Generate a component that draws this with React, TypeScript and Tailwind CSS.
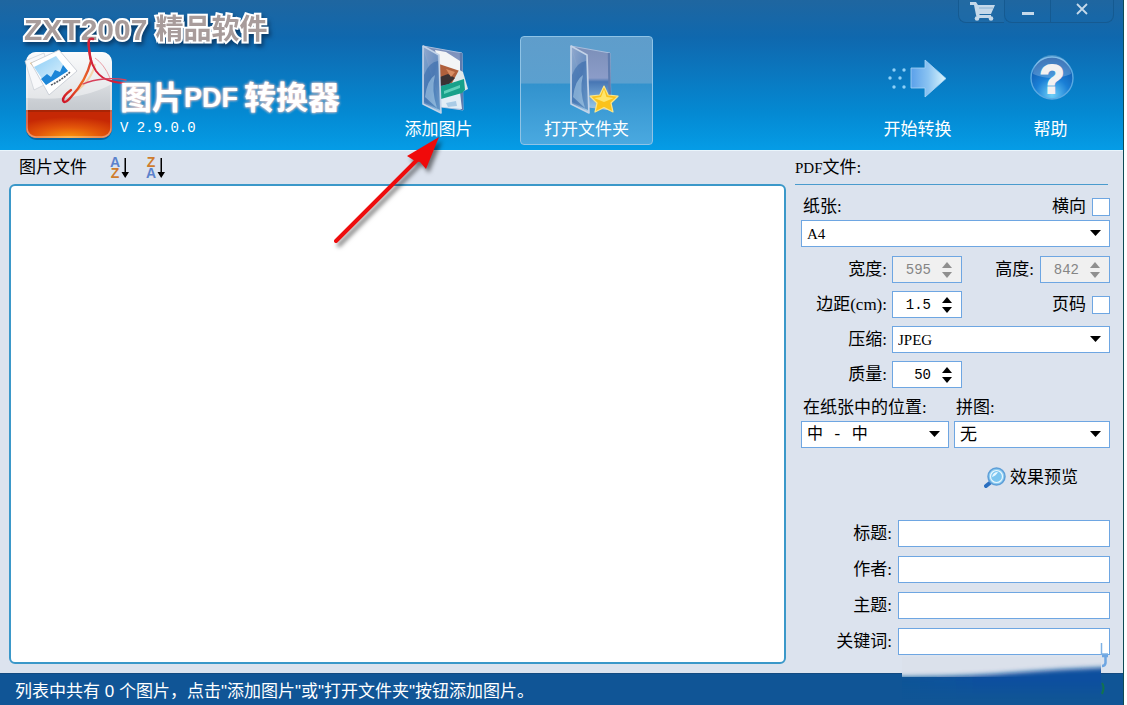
import React, { useState } from 'react';
import { clsx } from 'clsx';

interface ToolButtonProps {
  label: string;
  active?: boolean;
  children: React.ReactNode;
}

function ToolButton({ label, active, children }: ToolButtonProps) {
  return (
    <button
      type="button"
      className={clsx(
        'flex w-[133px] flex-col items-center rounded border pt-2 text-white',
        active
          ? 'border-[#8fc3e6] bg-[linear-gradient(to_bottom,#5f9dcb_0%,#5ba0cf_43%,#3292cd_44%,#4aa9e0_100%)]'
          : 'border-transparent'
      )}
    >
      {children}
      <span className="text-[17px] leading-[29px]">{label}</span>
    </button>
  );
}

function Folder({ id, children }: { id: string; children?: React.ReactNode }) {
  return (
    <svg width="64" height="70" viewBox="-15 0 64 70" aria-hidden="true">
      <defs>
        <linearGradient id={id + 'back'} x1="0" y1="0" x2="0" y2="1">
          <stop offset="0" stopColor="#7b8fb8" />
          <stop offset=".5" stopColor="#8b9cc8" />
          <stop offset=".56" stopColor="#4776b4" />
          <stop offset="1" stopColor="#9accec" />
        </linearGradient>
        <linearGradient id={id + 'front'} x1="0" y1="0" x2="1" y2="1">
          <stop offset="0" stopColor="#94abcf" />
          <stop offset=".5" stopColor="#6a90c2" />
          <stop offset="1" stopColor="#b4d8ef" />
        </linearGradient>
      </defs>
      <path d="M1 1L40 8L41 65L19 62Z" fill={`url(#${id}back)`} stroke="#a9bddc" strokeWidth="1" />
      <path d="M39 8L40 65" stroke="#5f7cae" strokeWidth="2.5" />
      {children}
      <path d="M1 1L17 10L19 68L1 59Z" fill={`url(#${id}front)`} fillOpacity=".9" stroke="#c3d3e8" strokeWidth="1.6" strokeLinejoin="round" />
      <path d="M2 30Q7 17 16 16L18 65L2 57Z" fill="#2b62a6" fillOpacity=".5" />
      <path d="M3 52Q5 35 13 30Q9 45 15 63Z" fill="#c6e4f6" fillOpacity=".45" />
    </svg>
  );
}

function AddImageIcon() {
  return (
    <Folder id="add">
      <path d="M36 24L41 27L46 44L38 48L28 40Z" fill="#dfe8ea" />
      <path d="M18 53L38 48L40 64L19 62Z" fill="#e2edf6" />
      <path d="M24 58L34 56L35 61L26 62Z" fill="#a9cbe6" />
      <path d="M17 18L37 25L30 38L18 38Z" fill="#b0603c" />
      <path d="M18 32L26 29L33 33L27 39L18 41Z" fill="#3b3234" />
      <path d="M24 24L33 27L29 32Z" fill="#d98d62" />
      <path d="M13 5L24 7L38 16L38 26L17 19Z" fill="#f3f5f6" />
      <path d="M17 42L42 34L43 45L40 48L19 54Z" fill="#17a18a" />
      <path d="M22 46L38 40L38 43L22 49Z" fill="#5fd0ba" />
    </Folder>
  );
}

function OpenFolderIcon() {
  return (
    <Folder id="open">
      <path d="M34 41L38.2 50L48 51.2L41 58L43 67L34 62.5L25 67L27 58L20 51.2L29.8 50Z" fill="#fbc21b" stroke="#fbe68a" strokeWidth="1.2" strokeLinejoin="round" />
      <path d="M34 44L36.5 52L44 53L34 57L24 53L31 52Z" fill="#fff08a" fillOpacity=".75" />
    </Folder>
  );
}

function StartIcon() {
  return (
    <svg width="64" height="70" viewBox="0 0 64 70" aria-hidden="true">
      <defs>
        <linearGradient id="arrow" x1="0" y1="0" x2="1" y2="0">
          <stop offset="0" stopColor="#5aa0ea" />
          <stop offset=".5" stopColor="#8cc4f2" />
          <stop offset="1" stopColor="#dcf6fd" />
        </linearGradient>
      </defs>
      <g fill="#8fd0f7">
        <circle cx="8" cy="25" r="1.7" />
        <circle cx="18" cy="25" r="1.7" />
        <circle cx="4" cy="33" r="1.7" />
        <circle cx="14" cy="33" r="1.7" />
        <circle cx="8" cy="42" r="1.7" />
        <circle cx="18" cy="42" r="1.7" />
      </g>
      <path d="M25 23H39V15L60 33.500L39 52V43H25Z" fill="url(#arrow)" stroke="#a8d6f6" strokeWidth=".8" />
    </svg>
  );
}

function HelpIcon() {
  return (
    <svg width="64" height="70" viewBox="0 0 64 70" aria-hidden="true">
      <defs>
        <radialGradient id="ball" cx=".5" cy=".9" r=".9">
          <stop offset="0" stopColor="#6fd0f8" />
          <stop offset=".45" stopColor="#1a7fd6" />
          <stop offset="1" stopColor="#0b4da0" />
        </radialGradient>
      </defs>
      <circle cx="33" cy="33" r="21" fill="url(#ball)" stroke="#5aa9e2" strokeWidth="1.4" />
      <path d="M14 29A19 19 0 0 1 52 29Q33 37 14 29Z" fill="#fff" fillOpacity=".22" />
      <text x="33" y="48" textAnchor="middle" fontFamily="Liberation Sans" fontWeight="700" fontSize="40" fill="#f3f1f1" stroke="#f3f1f1" strokeWidth="2">?</text>
    </svg>
  );
}

function Logo() {
  return (
    <svg width="110" height="106" viewBox="0 0 110 106" className="relative shrink-0" aria-hidden="true">
      <defs>
        <linearGradient id="tile" x1="0" y1="0" x2="0" y2="1">
          <stop offset="0" stopColor="#f5f6f8" />
          <stop offset=".6" stopColor="#c9cdd2" />
          <stop offset="1" stopColor="#b4b8be" />
        </linearGradient>
        <radialGradient id="fire" cx=".5" cy="1" r=".75">
          <stop offset="0" stopColor="#fb9a0c" />
          <stop offset=".5" stopColor="#e4570a" />
          <stop offset="1" stopColor="#c62805" />
        </radialGradient>
        <linearGradient id="sky" x1="0" y1="0" x2="1" y2="1">
          <stop offset="0" stopColor="#8ccdf6" />
          <stop offset="1" stopColor="#e8f6fd" />
        </linearGradient>
        <linearGradient id="ribbon" x1="1" y1="0" x2="0" y2="1">
          <stop offset="0" stopColor="#c8213c" />
          <stop offset=".5" stopColor="#ee6a24" />
          <stop offset="1" stopColor="#cf1428" />
        </linearGradient>
        <clipPath id="tileClip">
          <rect x="6" y="16" width="86" height="86" rx="10" />
        </clipPath>
      </defs>
      <rect x="6" y="19" width="86" height="85" rx="11" fill="#06406f" fillOpacity=".55" />
      <g clipPath="url(#tileClip)">
        <rect x="6" y="16" width="86" height="86" fill="url(#tile)" />
        <path d="M6 62Q60 66 92 48V16H6Z" fill="#fff" fillOpacity=".45" />
        <rect x="6" y="74" width="86" height="28" fill="url(#fire)" />
        <path d="M6 74H92V76H6Z" fill="#a92506" />
      </g>
      <rect x="7" y="17" width="84" height="84" rx="9" fill="none" stroke="#fff" strokeOpacity=".4" strokeWidth="1.5" />
      <path d="M5 25L24 17L32 45L14 54Z" fill="#f7f8fa" stroke="#c9ced6" strokeWidth=".7" />
      <path d="M10 27L24 22L16 34Z" fill="#f2a73a" />
      <path d="M11 27L39 14L57 35L29 59Z" fill="#fff" stroke="#c3c8d0" strokeWidth=".8" />
      <path d="M14 31L36 20L48 35L26 49Z" fill="url(#sky)" />
      <path d="M21 43L27 38L31 41L35 34L40 36L43 29L48 35L26 49Z" fill="#1c86d8" />
      <path d="M31 49Q42 44 50 36" fill="none" stroke="#555b64" strokeWidth="1.6" strokeDasharray="2 1" />
      <path d="M75 28Q72 44 54 57" fill="none" stroke="#f8c27e" strokeOpacity=".6" strokeWidth="2" />
      <path d="M75 22Q84 28 90 42" fill="none" stroke="#e9a0a8" strokeWidth="1" />
      <path d="M73 3Q67 1 69 12Q70 21 71 25Q66 45 51 61Q44 69 43 64Q43 60 51 54" fill="none" stroke="url(#ribbon)" strokeWidth="2.4" strokeLinecap="round" />
      <path d="M69 5Q68 23 76 35Q82 43 91 45Q99 47 104 47" fill="none" stroke="#d2203a" strokeWidth="2" strokeLinecap="round" />
      <path d="M106 44Q96 42 84 43Q72 44 63 48" fill="none" stroke="#d8405a" strokeWidth="1.3" strokeLinecap="round" />
    </svg>
  );
}

function SortIcon({ top, bottom }: { top: string; bottom: string }) {
  const fill = (ch: string) => (ch === 'A' ? '#5b82cc' : '#cf7c2c');
  return (
    <svg width="20" height="30" viewBox="0 0 20 30" className="overflow-visible" aria-hidden="true" fontFamily="Liberation Sans" fontWeight="700" fontSize="14">
      <text x="5" y="14" textAnchor="middle" fill={fill(top)}>{top}</text>
      <text x="5" y="25" textAnchor="middle" fill={fill(bottom)}>{bottom}</text>
      <path d="M14.500 5H16V19H19L15.200 25L11.500 19H14.500Z" fill="#000" />
    </svg>
  );
}

interface SelectProps {
  id: string;
  options: string[];
  className?: string;
}

function Select({ id, options, className }: SelectProps) {
  return (
    <div className={clsx('relative', className)}>
      <select
        id={id}
        className="block h-[27px] w-full appearance-none border border-[#6ea6e2] bg-white px-[5px] leading-6 text-black outline-none"
      >
        {options.map((o) => (
          <option key={o}>{o}</option>
        ))}
      </select>
      <svg className="pointer-events-none absolute top-[10px] right-[9px]" width="11" height="6" viewBox="0 0 11 6" aria-hidden="true">
        <path d="M0 0H11L5.500 6Z" fill="#000" />
      </svg>
    </div>
  );
}

interface SpinnerProps {
  id: string;
  initial: number;
  step?: number;
  disabled?: boolean;
}

function Spinner({ id, initial, step = 1, disabled }: SpinnerProps) {
  const [value, setValue] = useState(initial);
  const change = (d: number) => setValue((v) => Math.max(0, Math.round((v + d) * 10) / 10));
  return (
    <div
      className={clsx(
        'flex h-[27px] w-[70px] items-center border border-[#6ea6e2]',
        disabled ? 'bg-[#f0f0f0] text-[#858585]' : 'bg-white text-black'
      )}
    >
      <input
        id={id}
        value={value}
        disabled={disabled}
        onChange={(e) => setValue(Number(e.target.value) || 0)}
        className="w-[38px] bg-transparent text-right font-['Liberation_Mono',monospace] text-sm leading-5 outline-none"
      />
      <div className={clsx('ml-2.5 flex flex-col gap-1', disabled && 'opacity-40')}>
        <button type="button" aria-label="+" disabled={disabled} onClick={() => change(step)}>
          <svg className="block" width="12" height="6" viewBox="0 0 12 6"><path d="M1 6H11L6 0Z" /></svg>
        </button>
        <button type="button" aria-label="-" disabled={disabled} onClick={() => change(-step)}>
          <svg className="block" width="12" height="6" viewBox="0 0 12 6"><path d="M1 0H11L6 6Z" /></svg>
        </button>
      </div>
    </div>
  );
}

function Check({ id, label }: { id: string; label: string }) {
  return (
    <div className="flex items-center gap-1.5">
      <label htmlFor={id}>{label}</label>
      <input id={id} type="checkbox" className="size-[18px] appearance-none border border-[#6ea6e2] bg-white checked:bg-[#1d6fb8]" />
    </div>
  );
}

function WindowControls() {
  return (
    <div className="absolute top-0 right-[9px] flex h-[23px] text-[#c5d9ea]">
      <button type="button" aria-label="购买" className="flex w-[46px] items-center justify-center rounded-bl-lg border-b border-l border-[#155a91] bg-[#2870a8]/40">
        <svg width="26" height="20" viewBox="0 0 26 20" fill="currentColor" aria-hidden="true">
          <path d="M1 1H7L9 4H26L22 13H11L10 14H22V17H8L7 14L5 4H1Z" />
          <circle cx="8" cy="17.500" r="2.300" />
          <circle cx="22" cy="17.500" r="2.300" />
          <path d="M10 7H24" stroke="#7ea9cd" strokeWidth=".8" />
        </svg>
      </button>
      <button type="button" aria-label="最小化" className="flex w-[46px] items-center justify-center rounded-bl-lg border-b border-l border-[#155a91]">
        <span className="mt-1 h-[3px] w-3 bg-current" />
      </button>
      <button type="button" aria-label="关闭" className="flex w-[64px] items-center justify-center rounded-br-lg border-x border-b border-[#155a91] pb-1">
        <svg width="12" height="12" viewBox="0 0 12 12" stroke="currentColor" strokeWidth="1.8" aria-hidden="true">
          <path d="M1 1L11 11M11 1L1 11" />
        </svg>
      </button>
    </div>
  );
}

function Header() {
  return (
    <header className="relative flex h-[151px] items-start border-b border-[#eaf5fc] bg-[linear-gradient(to_bottom,#1f66a0_0%,#0f68ae_25%,#0a78c0_50%,#0489d2_75%,#059ce6_100%)]">
      <div className="w-[372px] pt-3 pl-6">
        <div className="flex gap-2 text-[28px] leading-9 font-bold text-[#a89c9b] drop-shadow-[2px_3px_2px_#0a3d6b] [-webkit-text-stroke:4px_white] [paint-order:stroke]">
          <span className="font-['Liberation_Sans',sans-serif] text-[30px]">ZXT2007</span>
          <span>精品软件</span>
        </div>
        <div className="-mt-3 -ml-1 flex">
          <Logo />
          <div className="relative -ml-2.5 pt-[42px] text-white">
            <h1 className="flex items-center text-[32px] leading-10 font-bold whitespace-nowrap [text-shadow:0_0_3px_#f3c9c4,0_0_3px_#f3c9c4]">
              图片<span className="mr-1.5 font-['Liberation_Sans',sans-serif] text-[27px]">PDF</span>转换器
            </h1>
            <p className="font-['Liberation_Mono',monospace] text-sm leading-5">V 2.9.0.0</p>
          </div>
        </div>
      </div>
      <div className="flex flex-1 justify-between pt-9 pr-1.5">
        <div className="flex gap-[15px]">
          <ToolButton label="添加图片"><AddImageIcon /></ToolButton>
          <ToolButton label="打开文件夹" active><OpenFolderIcon /></ToolButton>
        </div>
        <div className="flex">
          <ToolButton label="开始转换"><StartIcon /></ToolButton>
          <ToolButton label="帮助"><HelpIcon /></ToolButton>
        </div>
      </div>
      <WindowControls />
    </header>
  );
}

function PreviewIcon() {
  return (
    <svg width="22" height="22" viewBox="0 0 22 22" aria-hidden="true">
      <path d="M2 19L7 15" stroke="#2a6fc0" strokeWidth="4" strokeLinecap="round" />
      <circle cx="12.500" cy="9.500" r="8.500" fill="#8ccbf0" stroke="#5d9ed8" strokeWidth="1.500" />
      <circle cx="12.500" cy="9.500" r="6" fill="#7cc6f0" stroke="#e8f7fe" strokeWidth="1.200" />
      <path d="M8 10Q9 5 14 5Q12 9 8 10Z" fill="#e6f7ff" />
    </svg>
  );
}

function Settings() {
  return (
    <aside className="w-[337px] pr-[13px] pl-[15px] text-[17px] leading-[27px]">
      <h2 className="-ml-1.5 mr-0.5 h-[34px] border-b border-[#4a9bcd] pt-[3px]">
        <span className="text-[15px]">PDF</span>文件:
      </h2>
      <div className="mt-2 flex h-[27px] items-center justify-between">
        <label htmlFor="paper" className="pl-0.5">纸张:</label>
        <Check id="landscape" label="横向" />
      </div>
      <Select id="paper" options={['A4', 'A3', 'A5', 'B5']} className="text-[15px]" />
      <div className="mt-[9px] grid grid-cols-[86px_70px_1fr] items-center gap-x-[5px] gap-y-2">
        <label htmlFor="width" className="text-right">宽度:</label>
        <Spinner id="width" initial={595} disabled />
        <div className="flex items-center justify-end gap-1.5">
          <label htmlFor="height">高度:</label>
          <Spinner id="height" initial={842} disabled />
        </div>
        <label htmlFor="margin" className="text-right">边距(cm):</label>
        <Spinner id="margin" initial={1.5} step={0.1} />
        <div className="flex justify-end">
          <Check id="pageno" label="页码" />
        </div>
        <label htmlFor="compress" className="text-right">压缩:</label>
        <Select id="compress" options={['JPEG', 'ZIP']} className="col-span-2 text-[15px]" />
        <label htmlFor="quality" className="text-right">质量:</label>
        <Spinner id="quality" initial={50} />
      </div>
      <div className="mt-1.5 grid grid-cols-[148px_1fr] gap-x-[5px]">
        <label htmlFor="position" className="pl-0.5">在纸张中的位置:</label>
        <label htmlFor="puzzle" className="pl-0.5">拼图:</label>
        <Select id="position" options={['中 - 中', '左 - 上', '右 - 下']} className="font-['Liberation_Mono','Noto_Sans_CJK_SC',monospace] text-base" />
        <Select id="puzzle" options={['无', '2 x 1', '2 x 2']} />
      </div>
      <button type="button" className="mt-4 mr-8 ml-auto flex items-center gap-1">
        <PreviewIcon />
        效果预览
      </button>
      <div className="mt-[29px] grid grid-cols-[91px_1fr] gap-x-1.5 gap-y-[9px]">
        {['标题', '作者', '主题', '关键词'].map((name) => (
          <React.Fragment key={name}>
            <label htmlFor={name} className="text-right">{name}:</label>
            <input id={name} type="text" className="h-[27px] w-full min-w-0 border border-[#6ea6e2] bg-white px-1 outline-none" />
          </React.Fragment>
        ))}
      </div>
    </aside>
  );
}

function Pointer() {
  return (
    <svg className="pointer-events-none absolute top-[132px] left-[328px] drop-shadow-[3px_4px_2px_rgba(0,0,0,0.5)]" width="120" height="116" viewBox="0 0 120 116" aria-hidden="true">
      <path d="M8 109L90 27" stroke="#ee0c0c" strokeWidth="4" strokeLinecap="round" />
      <path d="M111 5L79 24L87 29L92 30L98 37Z" fill="#f00a0a" />
    </svg>
  );
}

// Smeared patch in the lower right corner
function Smudge() {
  return (
    <svg className="pointer-events-none absolute right-[14px] bottom-0" width="210" height="64" viewBox="0 0 210 64" aria-hidden="true">
      <defs>
        <linearGradient id="smear" x1="0" y1="0" x2="1" y2="0">
          <stop offset="0" stopColor="#105596" />
          <stop offset=".4" stopColor="#0d509f" />
          <stop offset="1" stopColor="#0d509f" />
        </linearGradient>
        <linearGradient id="fade" x1="0" y1="0" x2="0" y2="1">
          <stop offset=".55" stopColor="#fff" />
          <stop offset="1" stopColor="#000" />
        </linearGradient>
        <mask id="smearMask">
          <rect x="3" y="16" width="199" height="42" fill="url(#fade)" />
        </mask>
        <filter id="soft"><feGaussianBlur stdDeviation="2.5" /></filter>
      </defs>
      <g mask="url(#smearMask)">
        <rect x="3" y="16" width="199" height="20" fill="#dbe1eb" />
        <path d="M-6 36Q60 36 110 32T216 26V70H-6Z" fill="url(#smear)" filter="url(#soft)" />
      </g>
      <path d="M202.500 2V13H209" fill="none" stroke="#7fb2e5" strokeWidth="1.500" />
      <path d="M203 15H209M206.500 15V22Q206 25 203 25" fill="none" stroke="#6ea6e2" strokeWidth="2.500" />
      <path d="M203 42Q206 46 203 53" fill="none" stroke="#12734f" strokeWidth="2" />
    </svg>
  );
}

export default function App() {
  return (
    <div className="bg-white pr-[3px] font-['Liberation_Serif','Noto_Sans_CJK_SC',sans-serif] text-black">
      <div className="relative flex min-h-screen flex-col border-r border-[#0d4a55] bg-[#dce3ee]">
        <Header />
        <main className="flex flex-1 pb-[9px]">
          <section className="flex flex-1 flex-col pl-[9px]">
            <div className="flex h-[33px] items-center pl-2.5">
              <h2 className="text-[17px]">图片文件</h2>
              <button type="button" aria-label="A-Z" className="ml-[23px]"><SortIcon top="A" bottom="Z" /></button>
              <button type="button" aria-label="Z-A" className="ml-4"><SortIcon top="Z" bottom="A" /></button>
            </div>
            <div className="flex-1 rounded-md border-2 border-[#3b98c9] bg-white" />
          </section>
          <Settings />
        </main>
        <footer className="h-8 border-t border-[#134a80] bg-[#105596] pt-1 pl-[15px] font-['Liberation_Sans','Noto_Sans_CJK_SC',sans-serif] text-[17px] leading-7 text-white">
          列表中共有 0 个图片，点击"添加图片"或"打开文件夹"按钮添加图片。
        </footer>
        <Pointer />
        <Smudge />
      </div>
    </div>
  );
}
